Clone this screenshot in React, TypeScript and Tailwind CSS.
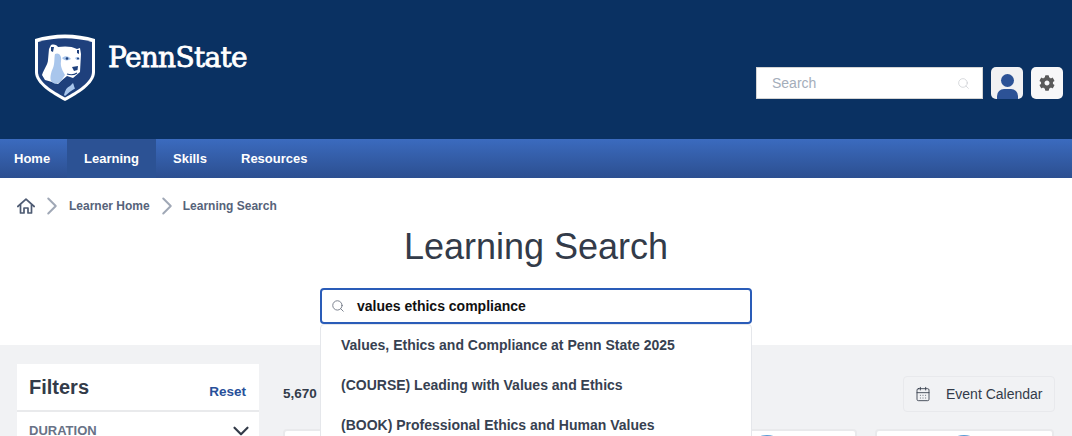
import { CalendarDays, ChevronDown, ChevronRight, Search } from "lucide-react";
import { FaCog } from "react-icons/fa";

const navItems = ["Home", "Learning", "Skills", "Resources"];

const suggestions = [
  "Values, Ethics and Compliance at Penn State 2025",
  "(COURSE) Leading with Values and Ethics",
  "(BOOK) Professional Ethics and Human Values",
];

const Shield = () => (
  <svg viewBox="0 0 62 67" className="w-[62px] h-[67px]">
    <path d="M1 5 C20 -1 42 -1 61 5 V38 C61 50 44 60 31 67 C18 60 1 50 1 38 Z" fill="#fff" />
    <path d="M4 8 C22 3 40 3 58 8 V38 C58 48 43 57 31 63.500 C19 57 4 48 4 38 Z" fill="#1e407c" />
    {/* body and mane */}
    <path d="M15 15 L17 11 C20 10 23 11 24 13 C30 12 38 12 43 15 L46 14 L47 20 L46 38 L39 44 L33 42 L27 47 L24 50 C20 49 16 47 11 46 L8 41 C10 35 14 30 14 26 Z" fill="#fff" />
    <path d="M21 20 C25 18 28 22 27 27 C26 33 29 37 31 41 L27 47 C24 50 21 51 18 48 C15 46 17 38 19 34 C21 29 20 24 21 20 Z" fill="#a9c6ec" />
    <path d="M17 13 L20 13 L19 18 L17 17 Z" fill="#1e407c" />
    <path d="M43 16 L45 16 L45 20 L43 19 Z" fill="#1e407c" />
    {/* eyes, nose and mouth */}
    <path d="M28 24 C31 21 35 22 37 25 C34 27 30 27 28 24 Z" fill="#a9c6ec" />
    <path d="M41 24 C43 22 45 23 46 25 C44 27 42 26 41 24 Z" fill="#a9c6ec" />
    <circle cx="33" cy="24.500" r="1.300" fill="#1e407c" />
    <circle cx="44" cy="24.500" r="1" fill="#1e407c" />
    <path d="M38 33 L44 32 L43.500 36 L40 37 Z" fill="#1e407c" />
    <path d="M33 40 C36 41 40 41 43 39" fill="none" stroke="#1e407c" strokeWidth="1.200" />
    {/* chest */}
    <path d="M30 61 C31 56 33 53 36 52 L39 49 C40 51 40 53 41 54.500 C37 57 34 59 31 62 Z" fill="#a9c6ec" />
  </svg>
);

const HomeIcon = () => (
  <svg viewBox="0 0 18 16" fill="none" stroke="#4e5b73" strokeWidth="1.700" className="w-[18px] h-[16px] shrink-0">
    <path d="M0.800 8.500 L9 1.200 L17.200 8.500" strokeLinecap="round" strokeLinejoin="round" />
    <path d="M3.500 6.500 V15 H7 V10 H11 V15 H14.500 V6.500" strokeLinejoin="round" />
  </svg>
);

const Header = () => (
  <header className="h-[139px] bg-[#0a3162] flex justify-between">
    <div className="flex items-start pl-[34px] pt-[34px] gap-[12px]">
      <Shield />
      <span className="font-['DejaVu_Serif',serif] text-[28px] leading-[48px] tracking-[-0.7px] text-white [-webkit-text-stroke:0.8px_white]">
        PennState
      </span>
    </div>
    <div className="flex items-start gap-[8px] pt-[67px] pr-[9px]">
      <div className="w-[227px] h-[32px] bg-white border border-[#d4d4d4] flex items-center justify-between pl-[15px] pr-[12px]">
        <span className="text-[14px] text-[#a4adba]">Search</span>
        <Search size={13} strokeWidth={1.2} className="text-[#c4c7cc]" />
      </div>
      <div className="w-[32px] h-[32px] rounded-[5px] bg-[#f1f1f3] overflow-hidden flex flex-col items-center">
        <div className="w-[13px] h-[13px] mt-[7px] rounded-full bg-[#2c5296]" />
        <div className="w-[21px] h-[10px] mt-[2px] rounded-t-[7px] bg-[#2c5296]" />
      </div>
      <div className="w-[32px] h-[32px] rounded-[5px] bg-[#f7f7f8] flex items-center justify-center">
        <FaCog size={16} className="text-[#5a5a5a]" />
      </div>
    </div>
  </header>
);

const Nav = () => (
  <nav className="h-[39px] bg-gradient-to-b from-[#3b6bbf] to-[#2c4f90] flex text-[13px] font-bold text-white">
    {navItems.map((item) => (
      <div
        key={item}
        className={
          item === "Learning"
            ? "w-[89px] bg-[#2c5294] flex items-center justify-center"
            : item === "Home"
              ? "w-[67px] pl-[14px] flex items-center"
              : item === "Skills"
                ? "w-[85px] pl-[17px] flex items-center"
                : "flex items-center"
        }
      >
        {item}
      </div>
    ))}
  </nav>
);

const Breadcrumb = () => (
  <div className="flex items-center h-[20px] pl-[17px] text-[12px] font-bold text-[#56637a]">
    <HomeIcon />
    <ChevronRight size={30} strokeWidth={1.6} className="text-[#a0a8b6] ml-[2px] mr-[2px]" />
    <span>Learner Home</span>
    <ChevronRight size={30} strokeWidth={1.6} className="text-[#a0a8b6] ml-[2px] mr-[1px]" />
    <span>Learning Search</span>
  </div>
);

const SearchBox = () => (
  <div className="relative w-[432px] mx-auto mt-[21px]">
    <div className="h-[36px] rounded-[4px] border-2 border-[#2a5cb8] bg-white flex items-center pl-[9px] gap-[12px]">
      <Search size={14} strokeWidth={1.5} className="text-[#6b7280]" />
      <span className="text-[14px] font-bold text-[#111]">values ethics compliance</span>
    </div>
    <div className="absolute z-10 left-0 right-0 top-[36px] h-[150px] bg-white border border-[#e5e7eb] rounded-t-[4px] pl-[20px] text-[14px] font-bold text-[#374151]">
      {suggestions.map((s) => (
        <div key={s} className="h-[40px] flex items-center">
          {s}
        </div>
      ))}
    </div>
  </div>
);

const FiltersCard = () => (
  <aside className="w-[242px] h-[100px] bg-white shrink-0">
    <div className="h-[48px] border-b-2 border-[#e9eaec] flex justify-between pl-[12px] pr-[13px]">
      <span className="text-[20px] leading-[30px] font-bold text-[#333b49] mt-[8px]">Filters</span>
      <span className="text-[13.500px] leading-[20px] font-bold text-[#28509a] mt-[18px]">Reset</span>
    </div>
    <div className="flex justify-between items-center pl-[12px] pr-[5px] pt-[6px]">
      <span className="text-[13px] font-bold text-[#687286]">DURATION</span>
      <ChevronDown size={26} strokeWidth={2} className="text-[#333b49]" />
    </div>
  </aside>
);

const Results = () => (
  <section className="flex-1 min-w-0 pl-[24px] pr-[18px]">
    <div className="flex justify-between items-start">
      <span className="text-[13.500px] leading-[20px] font-bold text-[#333b49] mt-[20px]">5,670 Results</span>
      <div className="w-[152px] h-[36px] rounded-[4px] border border-[#e8e9ec] flex items-center pl-[11px] gap-[15px] text-[14px] text-[#333b49] mt-[12px] mr-[-1px]">
        <CalendarDays size={16} strokeWidth={1.3} />
        Event Calendar
      </div>
    </div>
    <div className="flex gap-[18px] mt-[17px]">
      {[0, 1, 2, 3].map((i) => (
        <div key={i} className="flex-1 h-[60px] bg-white border-2 border-[#e9eaec] rounded-[4px] flex justify-center">
          <div className="w-[42px] h-[42px] mt-[4px] rounded-full bg-[#5a9bd5]" />
        </div>
      ))}
    </div>
  </section>
);

export default function App() {
  return (
    <div className="h-[436px] w-[1072px] overflow-hidden bg-white font-['Liberation_Sans',Arial,sans-serif]">
      <Header />
      <Nav />
      <div className="h-[167px] pt-[18px]">
        <Breadcrumb />
        <h1 className="text-center text-[36px] leading-[40px] text-[#333b49] mt-[11px]">Learning Search</h1>
        <SearchBox />
      </div>
      <main className="h-[91px] bg-[#f1f2f4] flex pl-[17px] pt-[19px]">
        <FiltersCard />
        <Results />
      </main>
    </div>
  );
}
